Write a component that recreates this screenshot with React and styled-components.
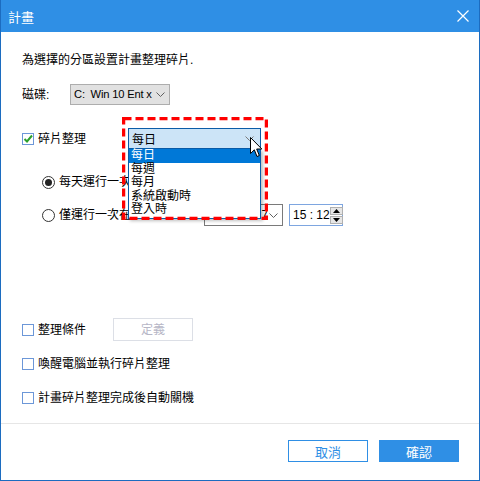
import React from 'react'
import styled, { createGlobalStyle } from 'styled-components'

const GlobalStyle = createGlobalStyle`
    html, body {
        margin: 0;
        padding: 0;
        background: #ffffff;
    }
    body {
        font-family: "Liberation Sans", "Noto Sans CJK TC", sans-serif;
        font-size: 12px;
        color: #000;
    }
`

const Chevron = ({ color = '#606060' }) => (
    <svg width="9" height="5" viewBox="0 0 9 5" style={{ flexShrink: 0 }}>
        <polyline points="0.5,0.5 4.5,4.5 8.5,0.5" fill="none" stroke={color} strokeWidth="1" />
    </svg>
)

export default function App() {
    return (
        <>
            <GlobalStyle />
            <Window>
                <TitleBar>
                    <span>計畫</span>
                    <CloseBtn>
                        <svg width="12" height="12" viewBox="0 0 12 12">
                            <path d="M0.5 0.5 L11.5 11.5 M11.5 0.5 L0.5 11.5" stroke="#fff" strokeWidth="1.2" />
                        </svg>
                    </CloseBtn>
                </TitleBar>

                <Body>
                    <Row $top={20} $h={16}>為選擇的分區設置計畫整理碎片.</Row>

                    <Row $top={16} $h={21}>
                        <Label $w={48}>磁碟:</Label>
                        <SelectBox $w={100} $bg="#e1e1e1" $border="#adadad">
                            <SelectText $size={11.2}>C:&nbsp; Win 10 Ent x</SelectText>
                            <Chevron />
                        </SelectBox>
                    </Row>

                    <Row $top={24} $h={20}>
                        <Check>
                            <svg width="10" height="10" viewBox="0 0 10 10">
                                <polyline points="1.5,5 4,7.5 9,1.5" fill="none" stroke="#2ca02c" strokeWidth="2" />
                            </svg>
                        </Check>
                        碎片整理
                    </Row>

                    <Row $top={23} $h={20} $indent={20}>
                        <Radio $on />
                        每天運行一次在
                    </Row>

                    <Row $top={12} $h={22} $indent={20}>
                        <Radio />
                        僅運行一次在
                        <SelectBox $w={79} $bg="#fff" $border="#7a7a7a" $ml={73}>
                            <SelectText>2021/12/27</SelectText>
                            <Chevron />
                        </SelectBox>
                        <TimeBox>
                            <span>15 : 12</span>
                            <Spinner>
                                <SpinBtn>
                                    <svg width="7" height="4" viewBox="0 0 7 4"><polygon points="0,4 3.5,0 7,4" fill="#000" /></svg>
                                </SpinBtn>
                                <SpinBtn>
                                    <svg width="7" height="4" viewBox="0 0 7 4"><polygon points="0,0 3.5,4 7,0" fill="#000" /></svg>
                                </SpinBtn>
                            </Spinner>
                        </TimeBox>
                    </Row>

                    <Row $top={92} $h={23}>
                        <Check />
                        整理條件
                        <GhostButton>定義</GhostButton>
                    </Row>

                    <Row $top={13} $h={20}>
                        <Check />
                        喚醒電腦並執行碎片整理
                    </Row>

                    <Row $top={14} $h={20}>
                        <Check />
                        計畫碎片整理完成後自動關機
                    </Row>
                </Body>

                <Footer>
                    <Button>取消</Button>
                    <Button $primary>確認</Button>
                </Footer>

                {/* open combo box lying over the dialog */}
                <Combo>
                    <ComboHead>
                        <span>每日</span>
                        <Chevron color="#7a7a7a" />
                    </ComboHead>
                    <ComboList>
                        <ComboItem $active>每日</ComboItem>
                        <ComboItem>每週</ComboItem>
                        <ComboItem>每月</ComboItem>
                        <ComboItem>系統啟動時</ComboItem>
                        <ComboItem>登入時</ComboItem>
                    </ComboList>
                </Combo>

                <Highlight width="146" height="103" viewBox="0 0 146 103">
                    <rect x="1.5" y="1.5" width="143" height="100" fill="none" stroke="#ff0000" strokeWidth="3.5" strokeDasharray="8 4" />
                </Highlight>

                <Cursor width="13" height="21" viewBox="0 0 13 21">
                    <path d="M0.5 0.5 L0.5 16.5 L4.3 12.8 L7 19.5 L9.3 18.5 L6.7 12 L11.8 12 Z" fill="#fff" stroke="#000" strokeWidth="1" strokeLinejoin="miter" />
                </Cursor>
            </Window>
        </>
    )
}

const Window = styled.div`
    position: relative;
    width: 480px;
    height: 481px;
    box-sizing: border-box;
    border: 1px solid #1c6cc0;
    border-top: none;
    display: flex;
    flex-direction: column;
    background: #fff;
    overflow: hidden;
`

const TitleBar = styled.div`
    height: 32px;
    margin: 0 -1px;
    background: #2f8fe5;
    color: #fff;
    font-size: 13px;
    display: flex;
    align-items: center;
    justify-content: space-between;
    padding: 0 9px 0 8px;
    flex-shrink: 0;
`

const CloseBtn = styled.div`
    display: flex;
    align-items: center;
    width: 14px;
    height: 14px;
`

const Body = styled.div`
    display: flex;
    flex-direction: column;
    padding-left: 21px;
`

const Row = styled.div`
    display: flex;
    align-items: center;
    margin-top: ${p => p.$top}px;
    height: ${p => p.$h}px;
    padding-left: ${p => p.$indent || 0}px;
    line-height: 1;
    white-space: nowrap;
`

const Label = styled.div`
    width: ${p => p.$w}px;
`

const SelectBox = styled.div`
    box-sizing: border-box;
    width: ${p => p.$w}px;
    height: 100%;
    margin-left: ${p => p.$ml || 0}px;
    background: ${p => p.$bg};
    border: 1px solid ${p => p.$border};
    display: flex;
    align-items: center;
    gap: 2px;
    padding: 0 4px 0 3px;
    font-size: 12px;
    color: #000;
`

const SelectText = styled.span`
    flex: 1;
    min-width: 0;
    overflow: hidden;
    white-space: nowrap;
    font-size: ${p => p.$size || 12}px;
    letter-spacing: ${p => (p.$size ? '-0.2px' : 'normal')};
`

const TimeBox = styled.div`
    box-sizing: border-box;
    width: 54px;
    height: 22px;
    margin-left: 6px;
    border: 1px solid #7ea6e0;
    display: flex;
    align-items: center;
    justify-content: space-between;
    padding: 0 1px 0 3px;
`

const Spinner = styled.div`
    display: flex;
    flex-direction: column;
    gap: 1px;
`

const SpinBtn = styled.div`
    width: 13px;
    height: 8px;
    box-sizing: border-box;
    background: #e6e6e6;
    border: 1px solid #b0b0b0;
    display: flex;
    align-items: center;
    justify-content: center;
`

const Check = styled.div`
    box-sizing: border-box;
    width: 12px;
    height: 12px;
    border: 1px solid #6c97d8;
    margin-right: 4px;
    background: #fff;
    display: flex;
    align-items: center;
    justify-content: center;
    flex-shrink: 0;
`

const Radio = styled.div`
    box-sizing: border-box;
    width: 13px;
    height: 13px;
    border-radius: 50%;
    border: 1px solid #333;
    margin-right: 4px;
    display: flex;
    align-items: center;
    justify-content: center;
    flex-shrink: 0;
    &::after {
        content: '';
        display: ${p => (p.$on ? 'block' : 'none')};
        width: 7px;
        height: 7px;
        border-radius: 50%;
        background: #222;
    }
`

const GhostButton = styled.div`
    box-sizing: border-box;
    width: 80px;
    height: 23px;
    margin-left: 27px;
    border: 1px solid #dcdfe6;
    color: #b6b6c6;
    display: flex;
    align-items: center;
    justify-content: center;
`

const Footer = styled.div`
    margin-top: auto;
    height: 57px;
    box-sizing: border-box;
    border-top: 1px solid #e6e6e6;
    display: flex;
    justify-content: flex-end;
    align-items: flex-start;
    gap: 11px;
    padding: 16px 20px 0 0;
`

const Button = styled.div`
    box-sizing: border-box;
    width: 80px;
    height: 22px;
    display: flex;
    align-items: center;
    justify-content: center;
    font-size: 13px;
    border: 1px solid #2f8fe5;
    background: ${p => (p.$primary ? '#2f8fe5' : '#fff')};
    color: ${p => (p.$primary ? '#fff' : '#2f8fe5')};
`

const Combo = styled.div`
    position: absolute;
    left: 127px;
    top: 128px;
    width: 133px;
    display: flex;
    flex-direction: column;
`

const ComboHead = styled.div`
    box-sizing: border-box;
    height: 21px;
    background: #cce4f7;
    border: 1px solid #0a5ca8;
    display: flex;
    align-items: center;
    justify-content: space-between;
    padding: 0 6px 0 3px;
    font-size: 12px;
`

const ComboList = styled.div`
    box-sizing: border-box;
    border: 1px solid #0a5ca8;
    border-top: none;
    background: #fff;
    box-shadow: 2px 2px 3px rgba(0, 0, 0, 0.25);
    padding-bottom: 1px;
`

const ComboItem = styled.div`
    height: 13.6px;
    line-height: 13.6px;
    padding-left: 2px;
    font-size: 12px;
    background: ${p => (p.$active ? '#0078d7' : 'transparent')};
    color: ${p => (p.$active ? '#fff' : '#000')};
`

const Highlight = styled.svg`
    position: absolute;
    left: 121px;
    top: 117px;
`

const Cursor = styled.svg`
    position: absolute;
    left: 249px;
    top: 137px;
`
